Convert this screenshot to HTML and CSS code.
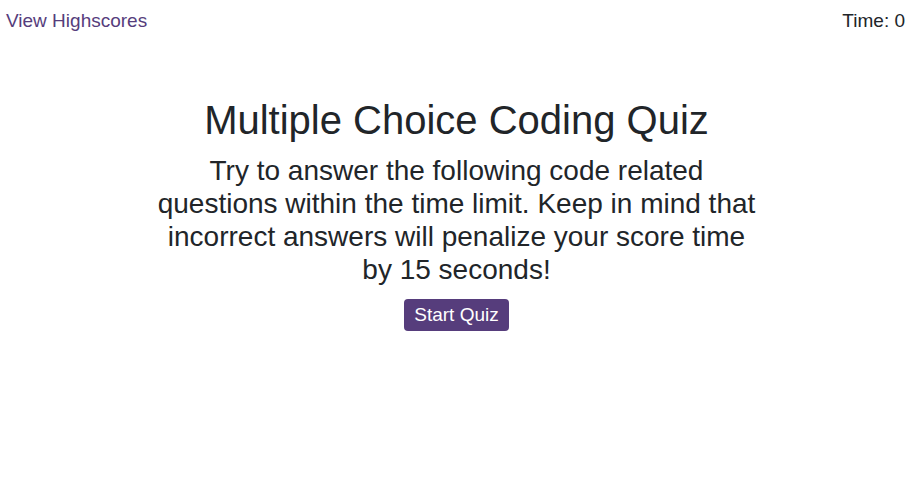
FILE: index.html
```html
<!DOCTYPE html>
<html>
<head>
<meta charset="utf-8">
<link rel="stylesheet" href="styles.css">
</head>
<body>
<header class="topbar">
  <a class="highscores" href="#">View Highscores</a>
  <div class="timer">Time: 0</div>
</header>
<main class="intro">
  <h1 class="title">Multiple Choice Coding Quiz</h1>
  <p class="desc">Try to answer the following code related questions within the time limit. Keep in mind that incorrect answers will penalize your score time by 15 seconds!</p>
  <button class="start">Start Quiz</button>
</main>
</body>
</html>
```
FILE: styles.css
```css
* { box-sizing: border-box; }
body {
  margin: 0;
  font-family: "Liberation Sans", Arial, sans-serif;
  color: #212529;
  background: #fff;
}
.topbar {
  display: flex;
  justify-content: space-between;
  align-items: flex-start;
  padding: 9px 8px 0 6px;
  font-size: 19px;
  line-height: 24px;
}
.highscores {
  color: #563d7c;
  text-decoration: none;
}
.timer { color: #212529; }
.intro {
  display: flex;
  flex-direction: column;
  align-items: center;
  text-align: center;
  margin-top: 63px;
}
.title {
  font-size: 40px;
  font-weight: 400;
  line-height: 48px;
  margin: 0;
}
.desc {
  font-size: 28px;
  line-height: 33px;
  max-width: 612px;
  margin: 10px 0 13px;
}
.start {
  font-family: inherit;
  font-size: 19px;
  line-height: 22px;
  height: 32px;
  color: #fff;
  background: #563d7c;
  border: none;
  border-radius: 4px;
  padding: 0 10.5px;
}
```
